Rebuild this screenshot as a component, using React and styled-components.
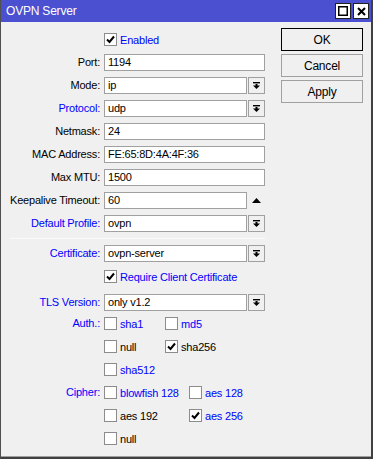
import React from 'react';
import styled, { createGlobalStyle } from 'styled-components';

const GlobalStyle = createGlobalStyle`
  html, body {
    margin: 0;
    padding: 0;
    background: #f0f0f0;
  }
  * {
    box-sizing: border-box;
  }
`;

const Window = styled.div`
  width: 373px;
  height: 459px;
  display: flex;
  flex-direction: column;
  background: #f0f0f0;
  border-left: 1px solid #505050;
  border-right: 2px solid #404040;
  border-bottom: 2px solid #404040;
  font-family: 'Liberation Sans', Arial, sans-serif;
  font-size: 11px;
  letter-spacing: -0.2px;
  color: #000;
  overflow: hidden;
`;

const TitleBar = styled.div`
  height: 22px;
  flex: none;
  display: flex;
  align-items: center;
  justify-content: space-between;
  background: #4a50d0;
  color: #fff;
  padding: 0 2px 0 5px;
  font-size: 12px;
`;

const TitleButtons = styled.div`
  display: flex;
  gap: 2px;
`;

const TitleButton = styled.div`
  width: 16px;
  height: 16px;
  display: flex;
  align-items: center;
  justify-content: center;
  background: #fff;
  border: 1px solid #202020;
`;

const Body = styled.div`
  flex: 1;
  display: flex;
  border-bottom: 1px solid #a0a0a0;
`;

const Form = styled.div`
  display: flex;
  flex-direction: column;
  gap: 6px;
  padding-top: 9px;
`;

const Row = styled.div`
  display: grid;
  grid-template-columns: 99px 161px;
  column-gap: 4px;
  align-items: ${(props) => (props.$top ? 'start' : 'center')};
  min-height: 17px;
  margin-top: ${(props) => props.$mt || '0'};
`;

const Label = styled.div`
  text-align: right;
  white-space: nowrap;
  line-height: 17px;
  color: ${(props) => (props.$blue ? '#0000ff' : '#000')};
`;

const Field = styled.div`
  display: flex;
  align-items: center;
  gap: 1px;
  height: 17px;
`;

const Input = styled.div`
  flex: 1;
  height: 17px;
  background: #fff;
  border: 1px solid #a0a0a0;
  padding: 0 3px;
  line-height: 15px;
  white-space: nowrap;
`;

const DropButton = styled.div`
  width: 17px;
  height: 17px;
  flex: none;
  display: flex;
  align-items: center;
  justify-content: center;
  border: 1px solid #a0a0a0;
  background: #f0f0f0;
`;

const Spinner = styled.div`
  width: 17px;
  height: 17px;
  flex: none;
  display: flex;
  align-items: center;
  justify-content: center;
`;

const Separator = styled.div`
  margin-left: 9px;
  width: 255px;
  height: 1px;
  background: #c8c8c8;
  border-bottom: 1px solid #fafafa;
`;

const CheckGrid = styled.div`
  display: grid;
  grid-template-columns: ${(props) => props.$first} auto;
  grid-auto-rows: 17px;
  row-gap: 6px;
`;

const CheckItem = styled.div`
  display: flex;
  align-items: center;
  gap: 3px;
  height: 17px;
  white-space: nowrap;
  color: ${(props) => (props.$blue ? '#0000ff' : '#000')};
`;

const Box = styled.div`
  width: 13px;
  height: 13px;
  flex: none;
  background: #fff;
  border: 1px solid #8c8c8c;
  display: flex;
  align-items: center;
  justify-content: center;
`;

const ButtonCol = styled.div`
  display: flex;
  flex-direction: column;
  gap: 3px;
  margin-left: 16px;
  padding-top: 6px;
`;

const Button = styled.div`
  width: 82px;
  height: 23px;
  display: flex;
  align-items: center;
  justify-content: center;
  background: #f0f0f0;
  border: 1px solid ${(props) => (props.$default ? '#000' : '#a0a0a0')};
  font-size: 12px;
`;

const DropIcon = () => (
  <svg width="7" height="7" viewBox="0 0 7 7">
    <rect x="0" y="0" width="7" height="1.4" fill="#000" />
    <rect x="2.5" y="2" width="2" height="2" fill="#000" />
    <polygon points="0,3.5 7,3.5 3.5,7" fill="#000" />
  </svg>
);

const UpIcon = () => (
  <svg width="9" height="5" viewBox="0 0 9 5">
    <polygon points="0,5 9,5 4.5,0" fill="#000" />
  </svg>
);

const Check = ({ checked }) => (
  <Box>
    {checked && (
      <svg width="9" height="9" viewBox="0 0 9 9">
        <polyline points="1,4.5 3.5,7 8,1.5" fill="none" stroke="#000" strokeWidth="2" />
      </svg>
    )}
  </Box>
);

const CheckBox = ({ label, checked, blue }) => (
  <CheckItem $blue={blue}>
    <Check checked={checked} />
    <span>{label}</span>
  </CheckItem>
);

const TextRow = ({ label, value, blue, drop, spin, mt }) => (
  <Row $mt={mt}>
    <Label $blue={blue}>{label}</Label>
    <Field>
      <Input>{value}</Input>
      {drop && (
        <DropButton>
          <DropIcon />
        </DropButton>
      )}
      {spin && (
        <Spinner>
          <UpIcon />
        </Spinner>
      )}
    </Field>
  </Row>
);

const App = () => {
  const auth = [
    { label: 'sha1', blue: true },
    { label: 'md5', blue: true },
    { label: 'null' },
    { label: 'sha256', checked: true },
    { label: 'sha512', blue: true },
  ];
  const cipher = [
    { label: 'blowfish 128', blue: true },
    { label: 'aes 128', blue: true },
    { label: 'aes 192' },
    { label: 'aes 256', checked: true, blue: true },
    { label: 'null' },
  ];

  return (
    <>
      <GlobalStyle />
      <Window>
        <TitleBar>
          <span>OVPN Server</span>
          <TitleButtons>
            <TitleButton>
              <svg width="10" height="10" viewBox="0 0 10 10">
                <rect x="0.75" y="0.75" width="8.5" height="8.5" fill="none" stroke="#000" strokeWidth="1.5" />
              </svg>
            </TitleButton>
            <TitleButton>
              <svg width="9" height="9" viewBox="0 0 9 9">
                <path d="M1 1 L8 8 M8 1 L1 8" stroke="#000" strokeWidth="2" />
              </svg>
            </TitleButton>
          </TitleButtons>
        </TitleBar>
        <Body>
          <Form>
            <Row>
              <Label />
              <CheckBox label="Enabled" checked blue />
            </Row>
            <TextRow label="Port:" value="1194" />
            <TextRow label="Mode:" value="ip" drop />
            <TextRow label="Protocol:" value="udp" drop blue />
            <TextRow label="Netmask:" value="24" />
            <TextRow label="MAC Address:" value="FE:65:8D:4A:4F:36" />
            <TextRow label="Max MTU:" value="1500" />
            <TextRow label="Keepalive Timeout:" value="60" spin />
            <TextRow label="Default Profile:" value="ovpn" drop blue />
            <Separator />
            <TextRow label="Certificate:" value="ovpn-server" drop blue />
            <Row>
              <Label />
              <CheckBox label="Require Client Certificate" checked blue />
            </Row>
            <TextRow label="TLS Version:" value="only v1.2" drop blue mt="3px" />
            <Row $top $mt="-2px">
              <Label $blue>Auth.:</Label>
              <CheckGrid $first="61px">
                {auth.map((item, idx) => (
                  <CheckBox key={idx} {...item} />
                ))}
              </CheckGrid>
            </Row>
            <Row $top>
              <Label $blue>Cipher:</Label>
              <CheckGrid $first="85px">
                {cipher.map((item, idx) => (
                  <CheckBox key={idx} {...item} />
                ))}
              </CheckGrid>
            </Row>
          </Form>
          <ButtonCol>
            <Button $default>OK</Button>
            <Button>Cancel</Button>
            <Button>Apply</Button>
          </ButtonCol>
        </Body>
      </Window>
    </>
  );
};

export default App;
